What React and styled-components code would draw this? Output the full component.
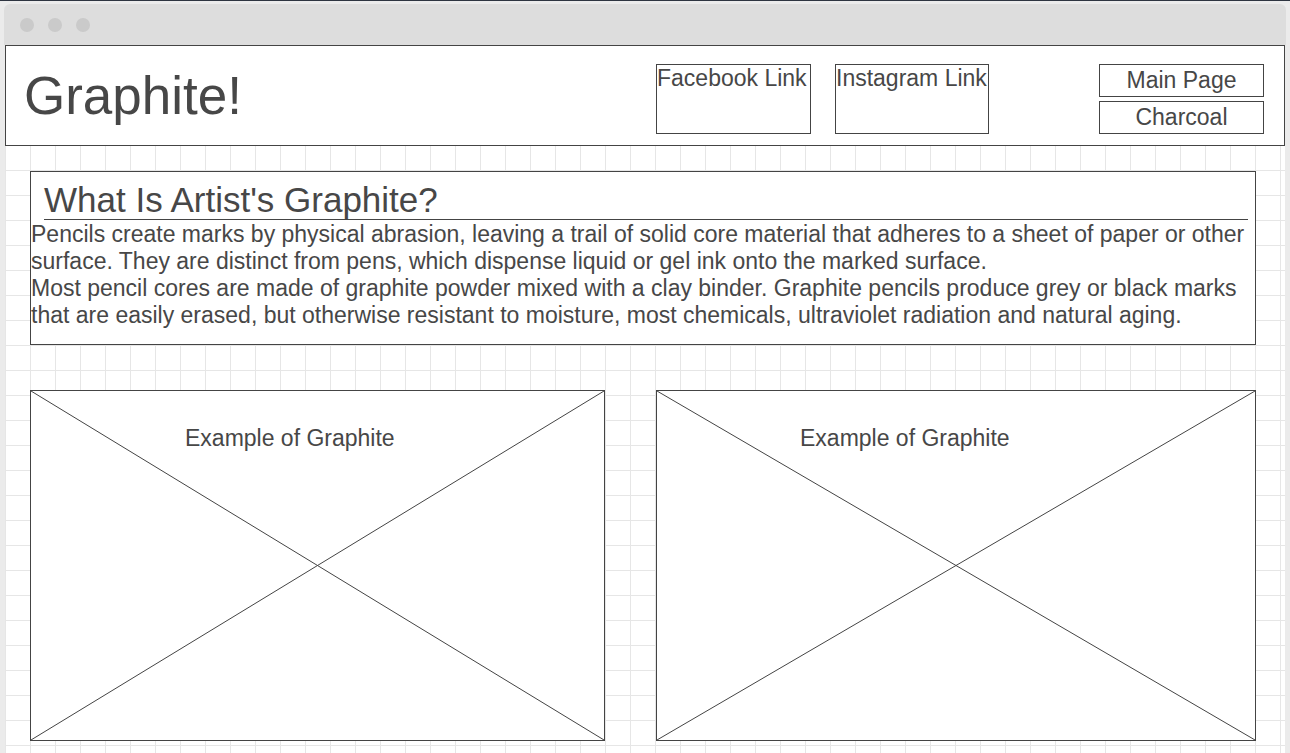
import styled, { createGlobalStyle } from 'styled-components';

const GlobalStyle = createGlobalStyle`
    html, body {
        margin: 0;
        padding: 0;
        background-color: #ebebeb;
    }

    body {
        font-family: "Liberation Sans", Arial, sans-serif;
        color: #474747;
    }
`;

// example images on the page, each one gets its own caption offset
const examples = [
    { id: 'one', width: 575, captionLeft: 154 },
    { id: 'two', width: 600, captionLeft: 143 },
];

const Placeholder = () => (
    <Cross viewBox="0 0 100 100" preserveAspectRatio="none">
        <line x1="0" y1="0" x2="100" y2="100" vectorEffect="non-scaling-stroke" />
        <line x1="100" y1="0" x2="0" y2="100" vectorEffect="non-scaling-stroke" />
    </Cross>
);

export default function App() {
    return (
        <>
            <GlobalStyle />
            <Page>
                <Window>
                    <TitleBar>
                        <Dot />
                        <Dot />
                        <Dot />
                    </TitleBar>
                    <Header>
                        <Title>Graphite!</Title>
                        <Links>
                            <LinkBox href="#">Facebook Link</LinkBox>
                            <LinkBox href="#">Instagram Link</LinkBox>
                        </Links>
                        <Nav>
                            <NavButton>Main Page</NavButton>
                            <NavButton>Charcoal</NavButton>
                        </Nav>
                    </Header>
                    <Canvas>
                        <Section>
                            <Heading>What Is Artist's Graphite?</Heading>
                            <Body>
                                <Paragraph>
                                    Pencils create marks by physical abrasion, leaving a trail of solid core material that adheres to a sheet of paper or other surface. They are distinct from pens, which dispense liquid or gel ink onto the marked surface.
                                </Paragraph>
                                <Paragraph>
                                    Most pencil cores are made of graphite powder mixed with a clay binder. Graphite pencils produce grey or black marks that are easily erased, but otherwise resistant to moisture, most chemicals, ultraviolet radiation and natural aging.
                                </Paragraph>
                            </Body>
                        </Section>
                        <Gallery>
                            {examples.map(example =>
                                <ImageBox key={example.id} $width={example.width}>
                                    <Placeholder />
                                    <Caption $left={example.captionLeft}>Example of Graphite</Caption>
                                </ImageBox>
                            )}
                        </Gallery>
                    </Canvas>
                </Window>
            </Page>
        </>
    );
}

const Page = styled.div`
    min-height: 100vh;
    box-sizing: border-box;
    border-top: 1px solid #2e3440;
    padding: 3px 4px 0 4px;
`;

const Window = styled.div`
    width: 1282px;
    display: flex;
    flex-direction: column;
    min-height: calc(100vh - 4px);
`;

const TitleBar = styled.div`
    height: 41px;
    background-color: #dddddd;
    border-radius: 6px 6px 0 0;
    display: flex;
    align-items: center;
    gap: 14px;
    padding-left: 16px;
    box-sizing: border-box;
`;

const Dot = styled.span`
    width: 14px;
    height: 14px;
    border-radius: 50%;
    background-color: #cacaca;
`;

const Header = styled.header`
    margin: 0 1px;
    height: 101px;
    box-sizing: border-box;
    border: 1px solid #444444;
    background-color: #ffffff;
    display: flex;
    align-items: flex-start;
    padding: 18px 20px 0 18px;
`;

const Title = styled.h1`
    margin: 2px 0 0 0;
    font-size: 53px;
    font-weight: normal;
    line-height: 60px;
    color: #474747;
    flex: 1;
`;

const Links = styled.div`
    display: flex;
    gap: 24px;
`;

const LinkBox = styled.a`
    width: ${props => props.$width || 155}px;
    height: 70px;
    box-sizing: border-box;
    border: 1px solid #444444;
    color: #474747;
    text-decoration: none;
    font-size: 23px;
    line-height: 26px;
    white-space: nowrap;

    & + & {
        width: 154px;
    }
`;

const Nav = styled.nav`
    margin-left: 110px;
    display: flex;
    flex-direction: column;
    gap: 4px;
`;

const NavButton = styled.div`
    width: 165px;
    height: 33px;
    box-sizing: border-box;
    border: 1px solid #444444;
    font-size: 23px;
    line-height: 31px;
    text-align: center;
    color: #474747;
`;

const Canvas = styled.main`
    flex: 1;
    margin: 0 1px;
    padding: 25px 0 12px 25px;
    background-color: #ffffff;
    background-image:
        linear-gradient(to right, #e6e6e6 1px, transparent 1px),
        linear-gradient(to bottom, #e6e6e6 1px, transparent 1px);
    background-size: 25px 25px;
    background-position: 0 24px;
`;

const Section = styled.section`
    width: 1226px;
    box-sizing: border-box;
    border: 1px solid #444444;
    background-color: #ffffff;
`;

const Heading = styled.h2`
    margin: 0 7px 0 13px;
    padding-top: 9px;
    font-size: 35px;
    font-weight: normal;
    line-height: 38px;
    border-bottom: 1px solid #444444;
    color: #474747;
`;

const Body = styled.div`
    padding: 1px 0 15px 0;
`;

const Paragraph = styled.p`
    margin: 0;
    font-size: 23px;
    line-height: 27px;
    color: #474747;
`;

const Gallery = styled.div`
    display: flex;
    gap: 51px;
    margin-top: 45px;
`;

const ImageBox = styled.div`
    position: relative;
    width: ${props => props.$width}px;
    height: 351px;
    box-sizing: border-box;
    border: 1px solid #444444;
    background-color: #ffffff;
`;

const Cross = styled.svg`
    position: absolute;
    inset: 0;
    width: 100%;
    height: 100%;

    line {
        stroke: #444444;
        stroke-width: 1;
    }
`;

const Caption = styled.div`
    position: relative;
    padding: 34px 0 0 ${props => props.$left}px;
    font-size: 23px;
    line-height: 27px;
    color: #474747;
`;
